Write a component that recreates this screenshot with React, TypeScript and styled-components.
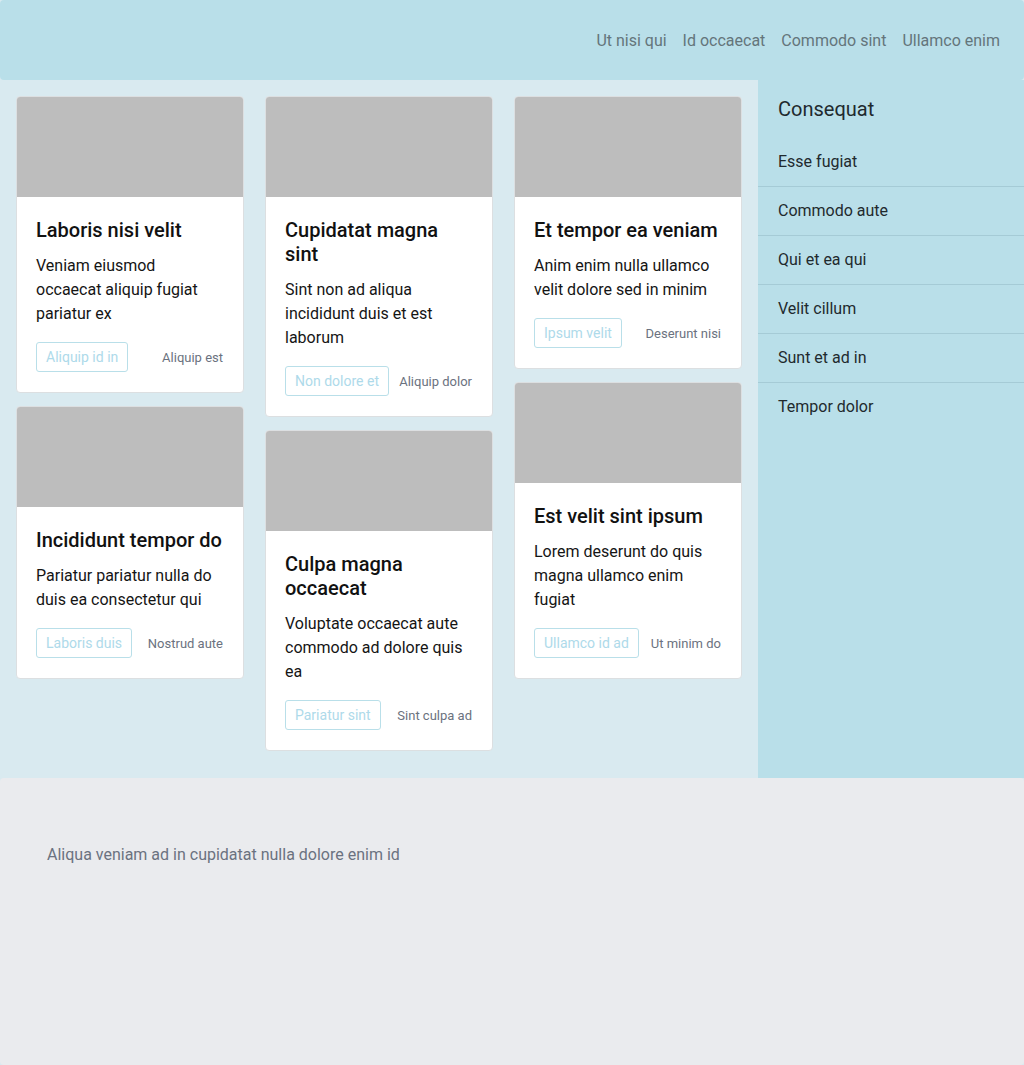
import React from "react";
import styled, { createGlobalStyle } from "styled-components";

const GlobalStyle = createGlobalStyle`
  html, body { margin: 0; padding: 0; }
  body {
    background: #d9eaf0;
    font-family: Roboto, "Noto Sans", "Liberation Sans", sans-serif;
    -webkit-font-smoothing: antialiased;
  }
  * { box-sizing: border-box; }
`;

const Page = styled.div`
  display: flex;
  flex-direction: column;
  min-height: 100vh;
`;

const Header = styled.header`
  height: 80px;
  background: #b9dfe9;
  border-radius: 4px;
  display: flex;
  align-items: center;
  justify-content: flex-end;
  padding: 0 24px;
  gap: 16px;
`;

const NavLink = styled.a`
  font-size: 16px;
  color: #64757b;
  text-decoration: none;
`;

const Main = styled.div`
  display: flex;
`;

const Content = styled.main`
  flex: 1;
  display: flex;
  gap: 21px;
  padding: 16px 16px 27px 16px;
  background: #d9eaf0;
`;

const Column = styled.div`
  flex: 1;
  display: flex;
  flex-direction: column;
  gap: 13px;
  min-width: 0;
`;

const Card = styled.article`
  background: #fff;
  border: 1px solid #dcdfe1;
  border-radius: 4px;
  overflow: hidden;
`;

const CardImage = styled.div`
  height: 100px;
  background: #bdbdbd;
`;

const CardBody = styled.div`
  padding: 21px 19px 20px 19px;
`;

const CardTitle = styled.h3`
  margin: 0 0 12px;
  font-size: 20px;
  line-height: 24px;
  font-weight: 500;
  color: #111;
`;

const CardText = styled.p`
  margin: 0;
  font-size: 16px;
  line-height: 24px;
  color: #151515;
`;

const CardFooter = styled.div`
  margin-top: 16px;
  display: flex;
  align-items: center;
  justify-content: space-between;
`;

const OutlineButton = styled.button`
  height: 30px;
  padding: 0 9px;
  background: #fff;
  border: 1px solid #b9dfe9;
  border-radius: 3px;
  color: #aedaea;
  font-family: inherit;
  font-size: 14px;
`;

const Meta = styled.span`
  font-size: 13px;
  color: #6b7280;
  padding-right: 1px;
`;

const Sidebar = styled.aside`
  width: 266px;
  background: #b9dfe9;
  padding-top: 17px;
`;

const SidebarTitle = styled.h2`
  margin: 0 0 17px;
  padding: 0 20px;
  font-size: 20px;
  line-height: 24px;
  font-weight: 400;
  color: #1f2a2e;
`;

const SideList = styled.ul`
  list-style: none;
  margin: 0;
  padding: 0;
`;

const SideItem = styled.li`
  padding: 12px 20px;
  font-size: 16px;
  line-height: 24px;
  color: #1f2a2e;
  border-bottom: 1px solid #a5cbd6;
  &:last-child { border-bottom: none; }
`;

const Footer = styled.footer`
  flex: 1;
  background: #eaebee;
  border-radius: 4px;
  padding: 65px 47px;
`;

const FooterText = styled.p`
  margin: 0;
  font-size: 16px;
  line-height: 24px;
  color: #6b7280;
`;

type CardData = { title: string; text: string; button: string; meta: string };

const columns: CardData[][] = [
  [
    { title: "Laboris nisi velit", text: "Veniam eiusmod occaecat aliquip fugiat pariatur ex", button: "Aliquip id in", meta: "Aliquip est" },
    { title: "Incididunt tempor do", text: "Pariatur pariatur nulla do duis ea consectetur qui", button: "Laboris duis", meta: "Nostrud aute" },
  ],
  [
    { title: "Cupidatat magna sint", text: "Sint non ad aliqua incididunt duis et est laborum", button: "Non dolore et", meta: "Aliquip dolor" },
    { title: "Culpa magna occaecat", text: "Voluptate occaecat aute commodo ad dolore quis ea", button: "Pariatur sint", meta: "Sint culpa ad" },
  ],
  [
    { title: "Et tempor ea veniam", text: "Anim enim nulla ullamco velit dolore sed in minim", button: "Ipsum velit", meta: "Deserunt nisi" },
    { title: "Est velit sint ipsum", text: "Lorem deserunt do quis magna ullamco enim fugiat", button: "Ullamco id ad", meta: "Ut minim do" },
  ],
];

const navItems = ["Ut nisi qui", "Id occaecat", "Commodo sint", "Ullamco enim"];
const sideItems = ["Esse fugiat", "Commodo aute", "Qui et ea qui", "Velit cillum", "Sunt et ad in", "Tempor dolor"];

export default function App() {
  return (
    <Page>
      <GlobalStyle />
      <Header>
        {navItems.map((n) => (
          <NavLink key={n} href="#">{n}</NavLink>
        ))}
      </Header>
      <Main>
        <Content>
          {columns.map((col, i) => (
            <Column key={i}>
              {col.map((c) => (
                <Card key={c.title}>
                  <CardImage />
                  <CardBody>
                    <CardTitle>{c.title}</CardTitle>
                    <CardText>{c.text}</CardText>
                    <CardFooter>
                      <OutlineButton>{c.button}</OutlineButton>
                      <Meta>{c.meta}</Meta>
                    </CardFooter>
                  </CardBody>
                </Card>
              ))}
            </Column>
          ))}
        </Content>
        <Sidebar>
          <SidebarTitle>Consequat</SidebarTitle>
          <SideList>
            {sideItems.map((s) => (
              <SideItem key={s}>{s}</SideItem>
            ))}
          </SideList>
        </Sidebar>
      </Main>
      <Footer>
        <FooterText>Aliqua veniam ad in cupidatat nulla dolore enim id</FooterText>
      </Footer>
    </Page>
  );
}
